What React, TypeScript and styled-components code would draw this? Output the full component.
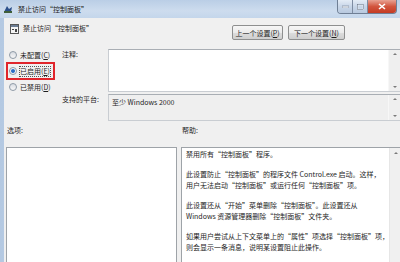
import * as React from 'react'
import styled, { createGlobalStyle } from 'styled-components'

const GlobalStyle = createGlobalStyle`
    html, body {
        margin: 0;
        padding: 0;
        background: #ffffff;
    }
    body {
        font-family: "Noto Sans CJK SC", "Noto Sans", sans-serif;
        font-size: 7px;
        color: #1e1e1e;
    }
`

const Window = styled.div`
    width: 400px;
    height: 262px;
    overflow: hidden;
    display: flex;
    flex-direction: column;
    background: linear-gradient(90deg, #b4c9e2 0%, #c6d7ec 40%, #bed1e8 100%);
`

const TitleBar = styled.div`
    height: 18px;
    flex: none;
    display: flex;
    align-items: flex-start;
    padding-left: 3px;
    background: linear-gradient(180deg, #bacee6 0%, #cddcee 60%, #c4d6eb 100%);
`

const TitleText = styled.span`
    margin-left: 5px;
    line-height: 18px;
    color: #1a1a1a;
    white-space: nowrap;
`

const Controls = styled.div`
    margin-left: auto;
    margin-right: 3px;
    display: flex;
    height: 13px;
    border: 1px solid #6f7f95;
    border-top: 0;
    border-radius: 0 0 4px 4px;
    overflow: hidden;
`

const CtlButton = styled.div<{ $close?: boolean; $w: number }>`
    width: ${p => p.$w}px;
    display: flex;
    align-items: center;
    justify-content: center;
    background: ${p =>
        p.$close
            ? 'linear-gradient(180deg, #e8a293 0%, #d2553e 50%, #c43b24 100%)'
            : 'linear-gradient(180deg, #e4ecf6 0%, #c8d6e8 50%, #b8c9df 100%)'};
    & + & {
        border-left: 1px solid #7d8ca2;
    }
`

const Frame = styled.div`
    flex: 1;
    display: flex;
    padding: 0 6px 0 4px;
    min-height: 0;
`

const Client = styled.div`
    flex: 1;
    background: #f0f0f0;
    display: flex;
    flex-direction: column;
    border-right: 1px solid #9fb2cb;
`

const HeaderRow = styled.div`
    height: 30px;
    flex: none;
    display: flex;
    align-items: flex-start;
    padding: 6px 0 0 6px;
    box-sizing: border-box;
`

const HeaderTitle = styled.span`
    margin-left: 4px;
    line-height: 9px;
    white-space: nowrap;
`

const NavButtons = styled.div`
    margin-left: auto;
    margin-right: 58px;
    margin-top: 1px;
    display: flex;
    gap: 5px;
`

const NavButton = styled.div<{ $w: number }>`
    width: ${p => p.$w}px;
    height: 15px;
    box-sizing: border-box;
    border: 1px solid #8e8f8f;
    border-radius: 2px;
    background: linear-gradient(180deg, #f6f6f6 0%, #ebebeb 50%, #dddddd 51%, #cfcfcf 100%);
    display: flex;
    align-items: center;
    justify-content: center;
    white-space: nowrap;
`

const TopSection = styled.div`
    display: grid;
    grid-template-columns: 52px 46px 1fr;
    grid-template-rows: 43px 27px;
    row-gap: 2px;
    padding: 1px 1px 0 6px;
`

const RadioGroup = styled.div`
    grid-row: 1 / span 2;
    display: flex;
    flex-direction: column;
    align-items: flex-start;
    margin-left: -4px;
    margin-top: -2px;
`

const RadioRow = styled.div<{ $marked?: boolean }>`
    display: flex;
    align-items: center;
    height: ${p => (p.$marked ? 14 : 12)}px;
    margin: ${p => (p.$marked ? '-1px 0' : '0')};
    min-width: 42px;
    padding: 0 2px 0 1px;
    border: 2px solid ${p => (p.$marked ? '#e0252b' : 'transparent')};
`

const RadioDot = styled.span<{ $on?: boolean }>`
    width: 6px;
    height: 6px;
    border-radius: 50%;
    border: 1px solid #8f9aa7;
    background: ${p =>
        p.$on
            ? 'radial-gradient(circle, #1f5fb8 0%, #3f7fd0 40%, #f2f4f7 55%)'
            : 'linear-gradient(180deg, #d8dce2, #f8f8f8)'};
    flex: none;
`

const RadioLabel = styled.span<{ $focus?: boolean }>`
    margin-left: 2px;
    line-height: 9px;
    border: 1px dotted ${p => (p.$focus ? '#555' : 'transparent')};
    white-space: nowrap;
`

const FieldLabel = styled.div`
    padding-top: 1px;
    line-height: 9px;
    white-space: nowrap;
`

const FieldBox = styled.div<{ $bg: string }>`
    display: flex;
    border: 1px solid #c9cdd2;
    border-top-color: #a9aeb4;
    background: ${p => p.$bg};
`

const FieldText = styled.div`
    flex: 1;
    padding: 3px 3px;
    line-height: 9px;
`

const ScrollColumn = styled.div<{ $w: number }>`
    width: ${p => p.$w}px;
    flex: none;
    display: flex;
    flex-direction: column;
    justify-content: space-between;
    align-items: center;
    padding: 3px 0;
    background: #efefef;
    border-left: 1px solid #f7f7f7;
`

const Arrow = styled.span<{ $up?: boolean }>`
    width: 0;
    height: 0;
    border-left: 2px solid transparent;
    border-right: 2px solid transparent;
    ${p => (p.$up ? 'border-bottom: 2px solid #7a7a7a;' : 'border-top: 2px solid #7a7a7a;')}
`

const PaneLabels = styled.div`
    display: grid;
    grid-template-columns: 175px 1fr;
    padding: 5px 0 0 3px;
    height: 26px;
    box-sizing: border-box;
    line-height: 9px;
`

const Panes = styled.div`
    flex: 1;
    display: grid;
    grid-template-columns: 171px 1fr;
    column-gap: 4px;
    padding: 0 1px 0 2px;
    min-height: 0;
`

const OptionsPane = styled.div`
    background: #ffffff;
    border: 1px solid #9ea3a8;
    border-bottom: 0;
`

const HelpPane = styled.div`
    display: flex;
    background: #ffffff;
    border: 1px solid #9ea3a8;
    border-bottom: 0;
`

const HelpText = styled.div`
    flex: 1;
    padding: 1px 0 0 4px;
    line-height: 11px;
`

const Para = styled.p`
    margin: 0 0 9px 0;
    white-space: nowrap;
`

const HelpScroll = styled.div`
    width: 11px;
    flex: none;
    display: flex;
    justify-content: center;
    padding-top: 4px;
    background: #f0f0f0;
    border-left: 1px solid #e6e6e6;
`

const TitleIcon = () => (
    <svg width="10" height="10" viewBox="0 0 10 10" style={{ marginTop: 4 }}>
        <path d="M1 8 L4 2 L6 5 L9 3 L8 8 Z" fill="#2b4f8a" />
        <rect x="1" y="7" width="8" height="2" fill="#3f5f3a" />
    </svg>
)

const PolicyIcon = () => (
    <svg width="9" height="10" viewBox="0 0 9 10">
        <rect x="0.5" y="0.5" width="8" height="9" fill="#f4f4f4" stroke="#555" />
        <rect x="1" y="1" width="7" height="2" fill="#6b7c93" />
        <rect x="2" y="5" width="2" height="1" fill="#444" />
        <rect x="5" y="5" width="2" height="3" fill="#444" />
    </svg>
)

export default function App() {
    return (
        <>
            <GlobalStyle />
            <Window>
                <TitleBar>
                    <TitleIcon />
                    <TitleText>禁止访问“控制面板”</TitleText>
                    <Controls>
                        <CtlButton $w={14}>
                            <svg width="7" height="3" viewBox="0 0 7 3"><rect x="0" y="1" width="7" height="2" fill="#f4f7fb" stroke="#5a6a80" strokeWidth="0.5" /></svg>
                        </CtlButton>
                        <CtlButton $w={14}>
                            <svg width="7" height="6" viewBox="0 0 7 6"><rect x="0.5" y="0.5" width="6" height="5" fill="none" stroke="#f4f7fb" strokeWidth="1.4" /><rect x="0.5" y="0.5" width="6" height="5" fill="none" stroke="#4e5e74" strokeWidth="0.5" /></svg>
                        </CtlButton>
                        <CtlButton $w={28} $close>
                            <svg width="8" height="7" viewBox="0 0 8 7"><path d="M1 1 L7 6 M7 1 L1 6" stroke="#ffffff" strokeWidth="1.6" /></svg>
                        </CtlButton>
                    </Controls>
                </TitleBar>
                <Frame>
                    <Client>
                        <HeaderRow>
                            <PolicyIcon />
                            <HeaderTitle>禁止访问“控制面板”</HeaderTitle>
                            <NavButtons>
                                <NavButton $w={51}>上一个设置(<u>P</u>)</NavButton>
                                <NavButton $w={57}>下一个设置(<u>N</u>)</NavButton>
                            </NavButtons>
                        </HeaderRow>
                        <TopSection>
                            <RadioGroup>
                                <RadioRow>
                                    <RadioDot />
                                    <RadioLabel>未配置(<u>C</u>)</RadioLabel>
                                </RadioRow>
                                <RadioRow $marked>
                                    <RadioDot $on />
                                    <RadioLabel $focus>已启用(<u>E</u>)</RadioLabel>
                                </RadioRow>
                                <RadioRow>
                                    <RadioDot />
                                    <RadioLabel>已禁用(<u>D</u>)</RadioLabel>
                                </RadioRow>
                            </RadioGroup>
                            <FieldLabel>注释:</FieldLabel>
                            <FieldBox $bg="#ffffff">
                                <FieldText />
                                <ScrollColumn $w={12}>
                                    <Arrow $up />
                                    <Arrow />
                                </ScrollColumn>
                            </FieldBox>
                            <FieldLabel>支持的平台:</FieldLabel>
                            <FieldBox $bg="#efefef">
                                <FieldText>至少 Windows 2000</FieldText>
                                <ScrollColumn $w={12}>
                                    <Arrow $up />
                                    <Arrow />
                                </ScrollColumn>
                            </FieldBox>
                        </TopSection>
                        <PaneLabels>
                            <span>选项:</span>
                            <span>帮助:</span>
                        </PaneLabels>
                        <Panes>
                            <OptionsPane />
                            <HelpPane>
                                <HelpText>
                                    <Para>禁用所有“控制面板”程序。</Para>
                                    <Para>
                                        此设置防止“控制面板”的程序文件 Control.exe 启动。这样，<br />
                                        用户无法启动“控制面板”或运行任何“控制面板”项。
                                    </Para>
                                    <Para>
                                        此设置还从“开始”菜单删除“控制面板”。此设置还从<br />
                                        Windows 资源管理器删除“控制面板”文件夹。
                                    </Para>
                                    <Para>
                                        如果用户尝试从上下文菜单上的“属性”项选择“控制面板”项，<br />
                                        则会显示一条消息，说明某设置阻止此操作。
                                    </Para>
                                </HelpText>
                                <HelpScroll>
                                    <Arrow $up />
                                </HelpScroll>
                            </HelpPane>
                        </Panes>
                    </Client>
                </Frame>
            </Window>
        </>
    )
}
